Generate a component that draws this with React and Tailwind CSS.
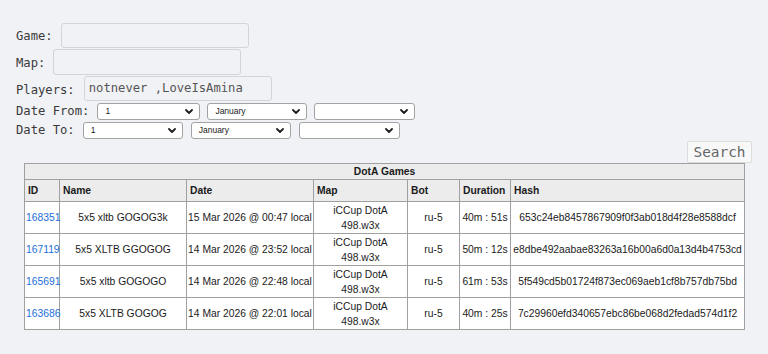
import React from "react";

const games = [
  { id: "168351", name: "5x5 xltb GOGOG3k", date: "15 Mar 2026 @ 00:47 local", bot: "ru-5", dur: "40m : 51s", hash: "653c24eb8457867909f0f3ab018d4f28e8588dcf" },
  { id: "167119", name: "5x5 XLTB GGOGOG", date: "14 Mar 2026 @ 23:52 local", bot: "ru-5", dur: "50m : 12s", hash: "e8dbe492aabae83263a16b00a6d0a13d4b4753cd" },
  { id: "165691", name: "5x5 xltb GOGOGO", date: "14 Mar 2026 @ 22:48 local", bot: "ru-5", dur: "61m : 53s", hash: "5f549cd5b01724f873ec069aeb1cf8b757db75bd" },
  { id: "163686", name: "5x5 XLTB GOGOG", date: "14 Mar 2026 @ 22:01 local", bot: "ru-5", dur: "40m : 25s", hash: "7c29960efd340657ebc86be068d2fedad574d1f2" },
];

const mono = { fontFamily: '"DejaVu Sans Mono", "Liberation Mono", monospace' };

function Chevron() {
  return (
    <svg width="8" height="5" viewBox="0 0 8 5" className="shrink-0">
      <path d="M1 1 L4 4 L7 1" fill="none" stroke="#1f1f1f" strokeWidth="1.8" strokeLinecap="round" strokeLinejoin="round" />
    </svg>
  );
}

function FakeSelect({ value, width }) {
  return (
    <div
      className="flex h-[17px] items-center justify-between rounded-[3px] border border-[#a3a3a3] bg-white pl-[7px] pr-[6px] text-[8.5px] text-[#222]"
      style={{ width, fontFamily: '"Liberation Sans", Arial, sans-serif' }}
    >
      <span>{value}</span>
      <Chevron />
    </div>
  );
}

export default function App() {
  return (
    <div className="min-h-[354px] w-full bg-[#f1f2f6] pt-[23px]">
      <div className="flex flex-col pl-[16px] text-[12.2px] text-[#3a3a3a]" style={mono}>
        <div className="flex h-[26px] items-start">
          <span className="mt-[4px]">Game:</span>
          <div className="ml-[8px] h-[25px] w-[188px] rounded-[3px] border border-[#d4d4d8]" />
        </div>
        <div className="flex h-[27px] items-start">
          <span className="mt-[5px]">Map:</span>
          <div className="ml-[8px] h-[26px] w-[188px] rounded-[3px] border border-[#d4d4d8]" />
        </div>
        <div className="flex h-[27px] items-start">
          <span className="mt-[5px]">Players:</span>
          <div className="ml-[9px] flex h-[25px] w-[188px] items-center rounded-[3px] border border-[#d4d4d8] pl-[4px] text-[#555]">
            notnever ,LoveIsAmina
          </div>
        </div>
        <div className="flex h-[19px] items-start">
          <span className="leading-[17px]">Date From:</span>
          <div className="ml-[8px] flex gap-[7px]">
            <FakeSelect value="1" width={103} />
            <FakeSelect value="January" width={100} />
            <FakeSelect value="" width={101} />
          </div>
        </div>
        <div className="flex h-[19px] items-start">
          <span className="leading-[17px]">Date To:</span>
          <div className="ml-[8px] flex gap-[8px]">
            <FakeSelect value="1" width={100} />
            <FakeSelect value="January" width={100} />
            <FakeSelect value="" width={101} />
          </div>
        </div>
      </div>

      <div className="flex justify-end pr-[16px]">
        <button
          className="h-[22px] w-[65px] rounded-[2px] border border-[#dcdcdc] bg-[#f8f8f9] text-[14.4px] leading-none text-[#666]"
          style={mono}
        >
          Search
        </button>
      </div>

      <table
        className="ml-[24px] w-[721px] table-fixed border-collapse border border-[#a0a0a0] text-[10.3px] text-[#1a1a1a]"
        style={{ fontFamily: '"Liberation Sans", Arial, sans-serif' }}
      >
        <colgroup>
          <col className="w-[35px]" />
          <col className="w-[127px]" />
          <col className="w-[127px]" />
          <col className="w-[94px]" />
          <col className="w-[52px]" />
          <col className="w-[51px]" />
          <col className="w-[234px]" />
        </colgroup>
        <thead>
          <tr className="h-[16px] bg-[#ececec]">
            <th colSpan={7} className="border border-[#a0a0a0] p-0 text-center font-bold leading-[14px]">
              DotA Games
            </th>
          </tr>
          <tr className="h-[22px] bg-[#ececec]">
            {["ID", "Name", "Date", "Map", "Bot", "Duration", "Hash"].map((h) => (
              <th key={h} className="border border-[#a0a0a0] px-[3px] py-0 text-left font-bold">
                {h}
              </th>
            ))}
          </tr>
        </thead>
        <tbody>
          {games.map((g) => (
            <tr key={g.id} className="h-[32px] bg-white text-center leading-[15px]">
              <td className="whitespace-nowrap border border-[#a0a0a0] px-[1px] text-left">
                <a href="#" className="text-[#1c6fd8]">{g.id}</a>
              </td>
              <td className="border border-[#a0a0a0] px-[2px]">{g.name}</td>
              <td className="whitespace-nowrap border border-[#a0a0a0] px-[1px]">{g.date}</td>
              <td className="border border-[#a0a0a0] px-[2px]">
                iCCup DotA
                <br />
                498.w3x
              </td>
              <td className="border border-[#a0a0a0] px-[2px]">{g.bot}</td>
              <td className="whitespace-nowrap border border-[#a0a0a0] px-[1px]">{g.dur}</td>
              <td className="whitespace-nowrap border border-[#a0a0a0] px-[1px]">{g.hash}</td>
            </tr>
          ))}
        </tbody>
      </table>
    </div>
  );
}
